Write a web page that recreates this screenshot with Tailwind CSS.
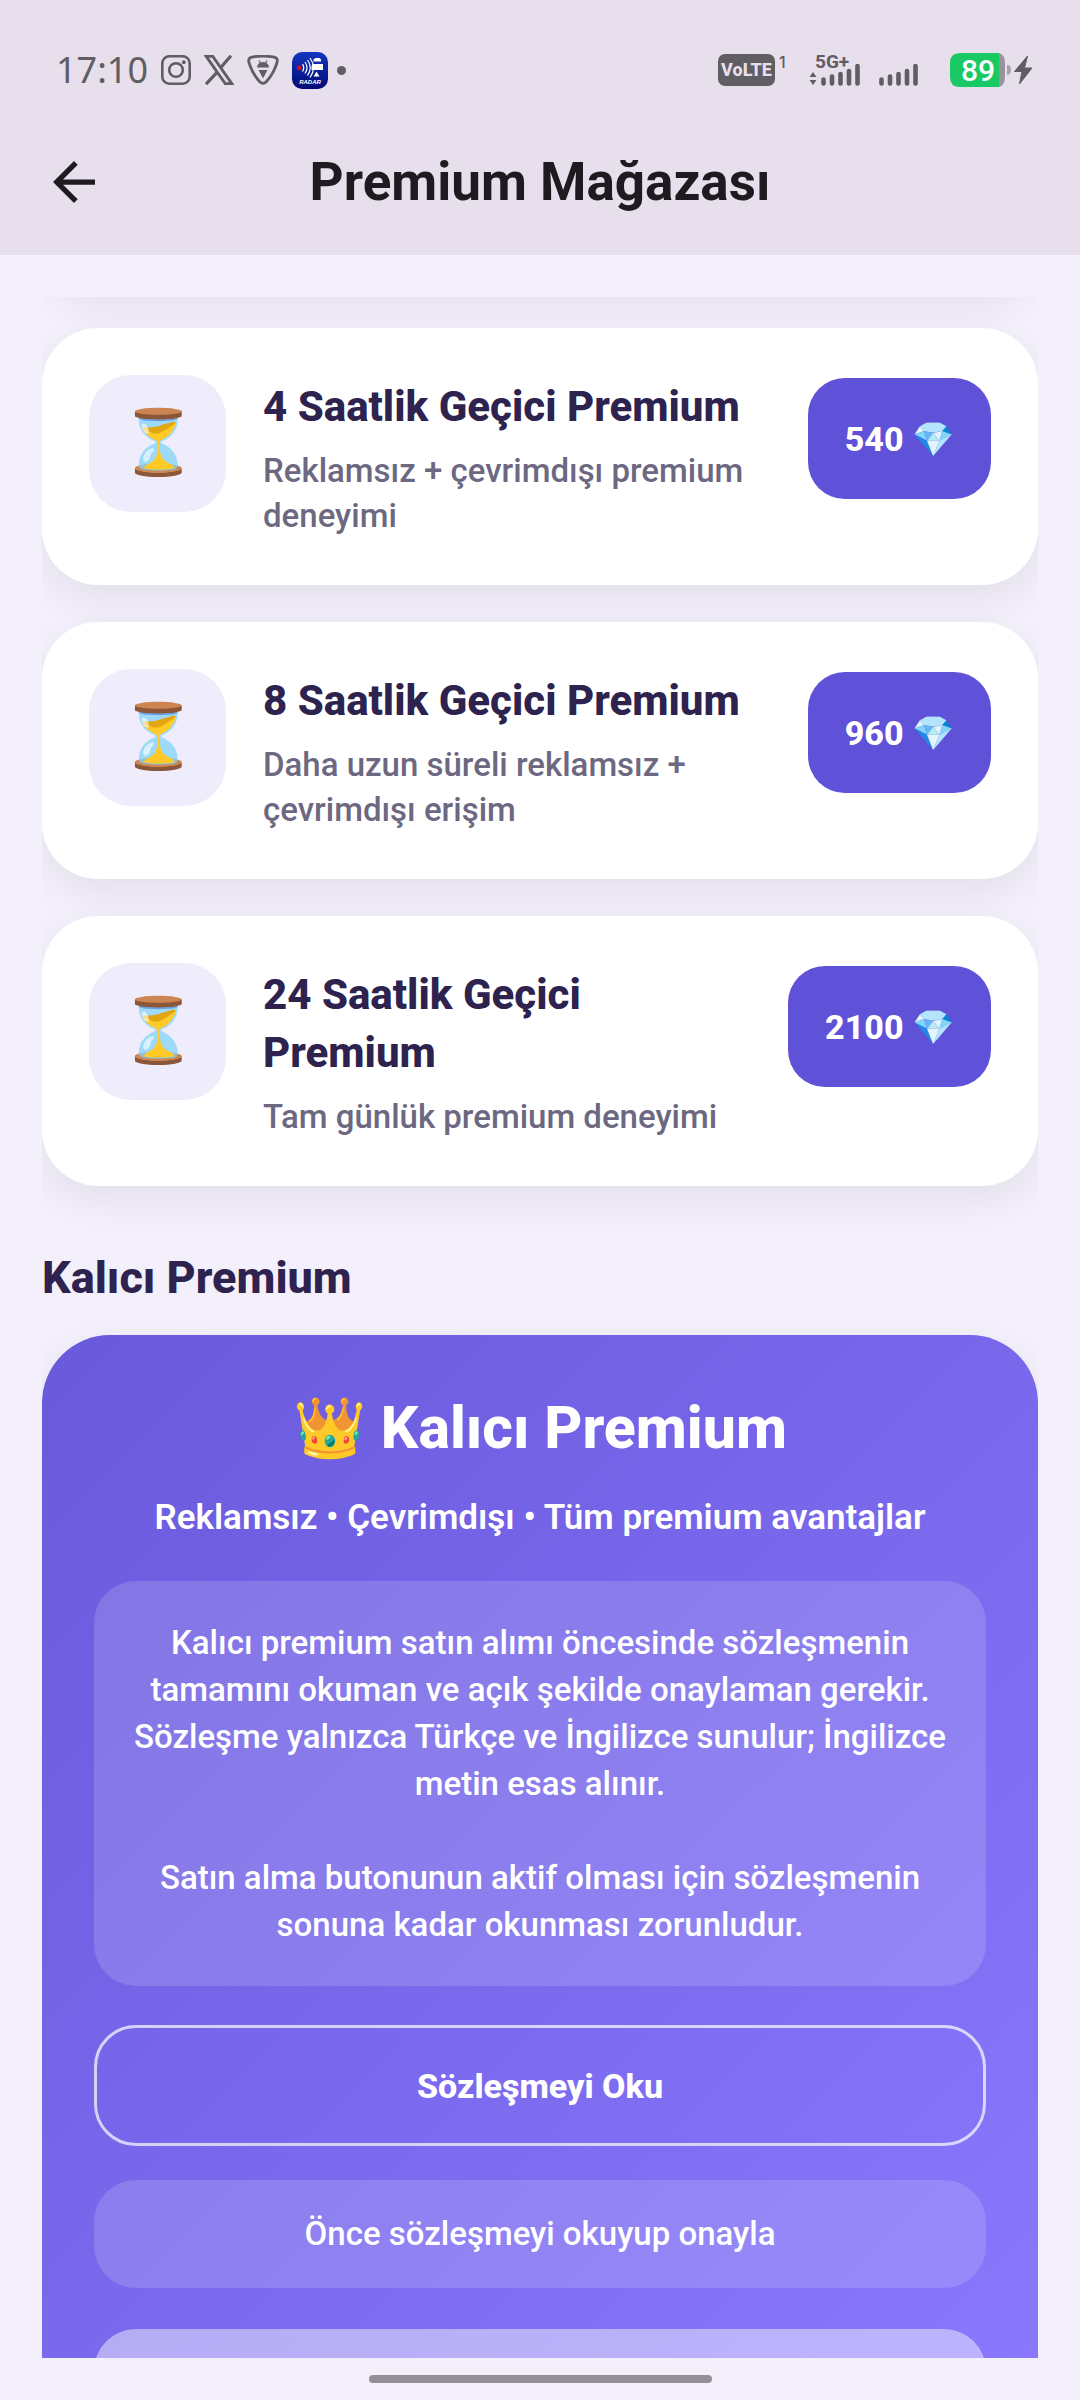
<!DOCTYPE html>
<html lang="tr">
<head>
    <meta charset="UTF-8">
    <meta name="viewport" content="width=device-width, initial-scale=1.0">
    <title>Premium Mağazası</title>
    <script src="https://cdn.jsdelivr.net/npm/@tailwindcss/browser@4"></script>
</head>
<body class="bg-[#f3f0fb] font-[Roboto,sans-serif] flex flex-col h-screen overflow-hidden">
    <header class="bg-[#e7dfeb] shrink-0">
        <!-- status bar -->
        <div class="h-[108px] pt-8 pl-14 pr-12 flex items-center justify-between text-[#605d63]">
            <div class="flex items-center gap-[13px]">
                <span class="font-['Noto_Sans',sans-serif] text-[36px] leading-[40px]">17:10</span>
                <svg class="w-[30px] h-[30px]" viewBox="0 0 30 30" fill="none" stroke="currentColor" stroke-width="2.6">
                    <rect x="1.3" y="1.3" width="27.4" height="27.4" rx="7"/>
                    <circle cx="15" cy="15" r="6.8"/>
                    <circle cx="22.8" cy="7.2" r="1.9" fill="currentColor" stroke="none"/>
                </svg>
                <svg class="w-[30px] h-[30px]" viewBox="0 0 30 30" fill="none" stroke="currentColor" stroke-width="2.8">
                    <path d="M2.200 1.400h6.600l19 27.200h-6.600z"/>
                    <path d="M27 .8 16.600 12.700M13 17.300 2 29.200" stroke-width="3.200"/>
                </svg>
                <svg class="w-8 h-[30px]" viewBox="0 0 32 30">
                    <path d="M6 1.800Q16 .6 26 1.800q5.500.8 4 5.800Q27 18 19.500 26.500q-3.500 3.600-7 0Q5 18 2 7.600.500 2.600 6 1.800z" fill="none" stroke="currentColor" stroke-width="2.800"/>
                    <path d="M10 12.500a6 5.500 0 0 1 12 0zM11.500 15h9L16 23.500z" fill="currentColor"/>
                    <path d="m12 5.500 1.800 3M20 5.500l-1.800 3" stroke="currentColor" stroke-width="1.200"/>
                </svg>
                <div class="flex items-center gap-[9px]">
                    <svg class="w-9 h-[37px]" viewBox="0 0 36 37">
                        <defs>
                            <linearGradient id="radar" x1="0" y1="0" x2="0" y2="1">
                                <stop offset="0" stop-color="#1236c0"/>
                                <stop offset="1" stop-color="#020a72"/>
                            </linearGradient>
                        </defs>
                        <rect width="36" height="37" rx="10" fill="url(#radar)"/>
                        <rect x="5" y="13.500" width="4.500" height="4.500" rx="1" fill="#c4122c"/>
                        <path d="M10.500 12q2.500 3.700 0 7.500M13 10q4 5.700 0 11.500M15.500 8q5.500 7.700 0 15.500M18 6q7 9.700 0 19.500" fill="none" stroke="#fff" stroke-width="1.200"/>
                        <path d="M21.500 9.500v-2l2-1.500h4l1.500 1.500v2zM20.500 12h10.500v6h-11.500v-4zM24.500 19.500l3 5h-6z" fill="#fff"/>
                        <text x="18" y="32" text-anchor="middle" font-family="Liberation Sans" font-size="6" font-weight="bold" font-style="italic" fill="#fff">RADAR</text>
                    </svg>
                    <span class="size-[9px] rounded-full bg-current"></span>
                </div>
            </div>

            <div class="flex items-center">
                <span class="w-[57px] h-8 rounded-[7px] bg-[#605d63] text-[#e7dfeb] font-[Roboto,sans-serif] font-extrabold text-[18px] leading-8 text-center">VoLTE</span>
                <span class="ml-1 mb-4 w-[10px] font-[Inter,sans-serif] text-[16px] leading-4 font-medium">1</span>
                <svg class="ml-5 w-[52px] h-8 overflow-visible" viewBox="0 0 52 32">
                    <text x="6" y="14" font-family="Roboto" font-size="19" font-weight="700" fill="currentColor">5G+</text>
                    <path d="m4 18 3.500 5h-7zM4 31l3.500-5h-7z" fill="currentColor"/>
                    <path d="M14.500 25.500v4M23 22.500v7M31.500 20v9.500M40 17v12.500M48.500 12v17.500" stroke="currentColor" stroke-width="4.600" stroke-linecap="round"/>
                </svg>
                <svg class="ml-[18px] w-10 h-8" viewBox="0 0 40 32">
                    <path d="M2.500 25.500v4M11 22.500v7M19.500 20v9.500M28 17v12.500M36.500 12v17.500" stroke="currentColor" stroke-width="4.600" stroke-linecap="round"/>
                </svg>
                <svg class="ml-[31px] w-[82px] h-[34px] overflow-visible" viewBox="0 0 82 34">
                    <path d="M10 0h39v34H10Q0 34 0 24V10Q0 0 10 0z" fill="#18c964"/>
                    <path d="M49 0q6 2 6 10v14q0 8-6 10z" fill="#99949c"/>
                    <path d="M57 12q4 0 4 5t-4 5z" fill="#a7a2aa"/>
                    <path d="M77.500 3 64.500 18.500h7.500L69.500 31 82 15h-7.500z" fill="currentColor" stroke="currentColor" stroke-linejoin="round"/>
                    <text x="28" y="28" text-anchor="middle" font-family="Roboto" font-size="30" font-weight="500" fill="#fff">89</text>
                </svg>
            </div>
        </div>

        <div class="h-[147px] px-[42px] grid grid-cols-[63px_1fr_63px] items-center">
            <button type="button" aria-label="Geri" class="size-[63px] flex items-center justify-center text-[#1d1b20]">
                <svg class="w-[42px] h-[42px]" viewBox="4 4 16 16" fill="currentColor">
                    <path d="M7.825 13l5.600 5.600L12 20l-8-8 8-8 1.425 1.400L7.825 11H20v2z"/>
                </svg>
            </button>
            <h1 class="text-[53px] leading-[64px] font-bold text-center text-[#1d1b20]">Premium Mağazası</h1>
        </div>
    </header>

    <main class="flex-1 min-h-0 mx-[42px] mt-[42px] overflow-hidden">
        <section class="flex flex-col gap-[37px]">
            <!-- end of the card that is scrolled away -->
            <div class="h-[200px] -mt-[206px] shrink-0 bg-white rounded-[56px] shadow-[0_14px_42px_rgba(0,0,0,0.07)]"></div>

            <article class="bg-white rounded-[56px] p-[47px] flex items-start gap-[37px] shadow-[0_14px_42px_rgba(0,0,0,0.07)]">
                <div class="size-[137px] shrink-0 rounded-[42px] bg-[#efecfb] flex items-center justify-center text-[63px]">⏳</div>
                <div class="flex-1 pt-[3px]">
                    <h3 class="text-[42px] leading-[58px] font-extrabold text-[#2d234e]">4 Saatlik Geçici Premium</h3>
                    <p class="mt-[12px] text-[33px] leading-[45px] font-medium text-[#6d6881]">Reklamsız + çevrimdışı premium deneyimi</p>
                </div>
                <button type="button" class="mt-[3px] h-[121px] px-[37px] pt-[2px] shrink-0 rounded-[37px] bg-[#5f51d8] text-white text-[34px] font-extrabold">540 💎</button>
            </article>

            <article class="bg-white rounded-[56px] p-[47px] flex items-start gap-[37px] shadow-[0_14px_42px_rgba(0,0,0,0.07)]">
                <div class="size-[137px] shrink-0 rounded-[42px] bg-[#efecfb] flex items-center justify-center text-[63px]">⏳</div>
                <div class="flex-1 pt-[3px]">
                    <h3 class="text-[42px] leading-[58px] font-extrabold text-[#2d234e]">8 Saatlik Geçici Premium</h3>
                    <p class="mt-[12px] text-[33px] leading-[45px] font-medium text-[#6d6881]">Daha uzun süreli reklamsız + çevrimdışı erişim</p>
                </div>
                <button type="button" class="mt-[3px] h-[121px] px-[37px] pt-[2px] shrink-0 rounded-[37px] bg-[#5f51d8] text-white text-[34px] font-extrabold">960 💎</button>
            </article>

            <article class="bg-white rounded-[56px] p-[47px] flex items-start gap-[37px] shadow-[0_14px_42px_rgba(0,0,0,0.07)]">
                <div class="size-[137px] shrink-0 rounded-[42px] bg-[#efecfb] flex items-center justify-center text-[63px]">⏳</div>
                <div class="flex-1 pt-[3px]">
                    <h3 class="text-[42px] leading-[58px] font-extrabold text-[#2d234e]">24 Saatlik Geçici Premium</h3>
                    <p class="mt-[12px] text-[33px] leading-[45px] font-medium text-[#6d6881]">Tam günlük premium deneyimi</p>
                </div>
                <button type="button" class="mt-[3px] h-[121px] px-[37px] pt-[2px] shrink-0 rounded-[37px] bg-[#5f51d8] text-white text-[34px] font-extrabold">2100 💎</button>
            </article>
        </section>

        <h2 class="mt-[66px] mb-[31px] text-[45px] leading-[52px] font-extrabold text-[#2d234e]">Kalıcı Premium</h2>

        <section class="rounded-[68px] p-[52px] flex flex-col text-center text-white bg-[linear-gradient(135deg,#6959db,#8c7aff)] shadow-[0_14px_42px_rgba(0,0,0,0.07)]">
            <h3 class="text-[59px] leading-[82px] font-extrabold">👑 Kalıcı Premium</h3>
            <p class="mt-[24px] text-[35px] leading-[50px] font-semibold">Reklamsız • Çevrimdışı • Tüm premium avantajlar</p>

            <div class="mt-[38px] rounded-[42px] bg-white/15 px-[37px] py-[38px] text-[33px] leading-[47px] font-medium">
                <p>Kalıcı premium satın alımı öncesinde sözleşmenin tamamını okuman ve açık şekilde onaylaman gerekir. Sözleşme yalnızca Türkçe ve İngilizce sunulur; İngilizce metin esas alınır.</p>
                <p class="mt-[47px]">Satın alma butonunun aktif olması için sözleşmenin sonuna kadar okunması zorunludur.</p>
            </div>

            <button type="button" class="mt-[39px] h-[121px] pt-[2px] rounded-[42px] border-3 border-white/70 text-[34px] font-extrabold">Sözleşmeyi Oku</button>
            <button type="button" disabled class="mt-[34px] h-[108px] rounded-[42px] bg-white/15 text-[33px] font-medium">Önce sözleşmeyi okuyup onayla</button>
            <button type="button" disabled aria-label="Satın al" class="mt-[41px] h-[121px] rounded-[42px] bg-white/45"></button>
        </section>
    </main>

    <!-- gesture bar -->
    <div class="h-[42px] shrink-0 flex items-center justify-center">
        <div class="w-[343px] h-2 rounded-full bg-[#938f98]"></div>
    </div>
</body>
</html>
